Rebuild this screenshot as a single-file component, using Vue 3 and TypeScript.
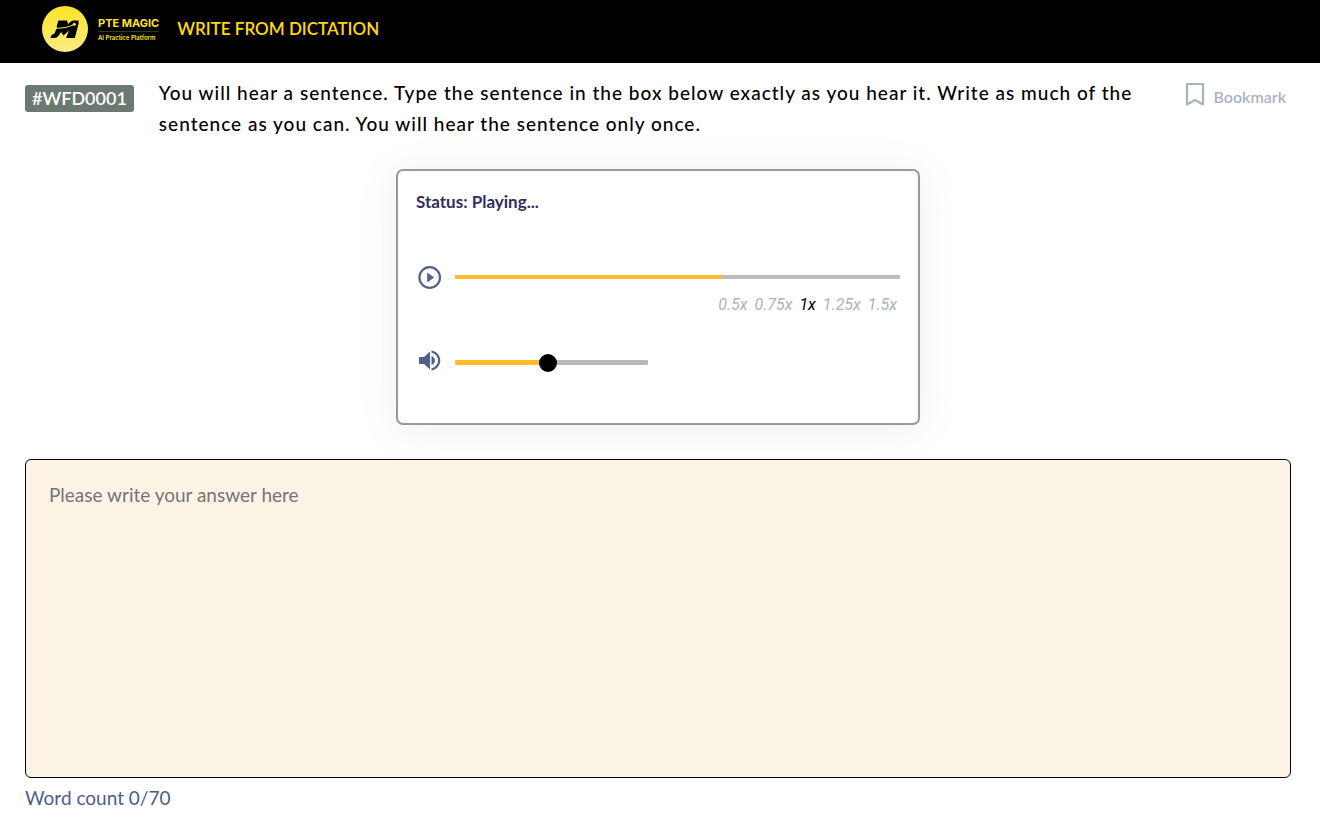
<script setup lang="ts">
import { computed, ref } from 'vue'

const speeds = ['0.5x', '0.75x', '1x', '1.25x', '1.5x']
const speed = ref('1x')
const progress = ref(60)
const volume = ref(48)
const answer = ref('')
const wordLimit = 70

const wordCount = computed(() => answer.value.split(/\s+/).filter(Boolean).length)
const volumeStyle = computed(() => ({ '--level': `${volume.value}%` }))
</script>

<template>
  <div class="page">
    <header class="topbar">
      <a class="brand" href="#" aria-label="PTE Magic home">
        <svg class="logo" viewBox="0 0 46 46" aria-hidden="true">
          <defs>
            <linearGradient id="logo-fill" x1="0" y1="0" x2="0" y2="1">
              <stop offset="0" stop-color="#fde428" />
              <stop offset="1" stop-color="#f8ec82" />
            </linearGradient>
          </defs>
          <circle cx="23" cy="23" r="23" fill="url(#logo-fill)" />
          <path
            fill="#000"
            d="M16.500 14.500H25L26 18 29 15.500Q30.200 14.500 31.500 14.500H36.500V18L32.800 32H24L27 24.500 21.500 29.500 19 26 16.400 30Q15 32 12 32H8.500Q8.500 28.500 12.500 27.500L15.300 20.500H14.500Z"
          />
          <path d="M14 22.300Q25 22 31 19" fill="none" stroke="#fbe74e" stroke-width="1" />
          <circle cx="32.300" cy="18.200" r="1.500" fill="#fbe74e" />
        </svg>
        <span class="brand-text">
          <span class="brand-name">PTE MAGIC</span>
          <span class="brand-tag">AI Practice Platform</span>
        </span>
      </a>
      <h1 class="title">WRITE FROM DICTATION</h1>
    </header>

    <main class="content">
      <section class="intro">
        <span class="badge">#WFD0001</span>
        <p class="instruction">
          You will hear a sentence. Type the sentence in the box below exactly as you hear it.
          Write as much of the sentence as you can. You will hear the sentence only once.
        </p>
        <button class="bookmark" type="button">
          <svg class="bookmark-icon" viewBox="0 0 20 24" aria-hidden="true">
            <path d="M2 2H18V22.500L10 18 2 22.500Z" fill="none" stroke="#a9b3bf" stroke-width="2.200" stroke-linejoin="round" />
          </svg>
          <span class="bookmark-label">Bookmark</span>
        </button>
      </section>

      <section class="player" aria-label="Audio player">
        <p class="status">Status: Playing...</p>
        <div class="row">
          <button class="icon-button" type="button" aria-label="Play">
            <svg viewBox="0 0 24 24" aria-hidden="true">
              <circle cx="11.700" cy="12.500" r="10.300" fill="none" stroke="#53618a" stroke-width="2.200" />
              <path d="M9.200 7.500V17.500L16.200 12.500Z" fill="#53618a" />
            </svg>
          </button>
          <progress class="track" :value="progress" max="100" aria-label="Playback position"></progress>
        </div>
        <div class="speeds" role="group" aria-label="Playback speed">
          <button
            v-for="item in speeds"
            :key="item"
            type="button"
            class="speed"
            :class="{ active: item === speed }"
            :aria-pressed="item === speed"
            @click="speed = item"
          >{{ item }}</button>
        </div>
        <div class="row">
          <button class="icon-button" type="button" aria-label="Mute">
            <svg viewBox="0 0 24 24" aria-hidden="true">
              <path
                fill="#53618a"
                d="M1 7V14H6L12 19.500V1.500L6 7ZM13.500 6V15C15.700 14 17 12.500 17 10.500S15.700 7 13.500 6ZM13.500 .5V2.800C17.500 3.700 20 6.700 20 10.500S17.500 17.300 13.500 18.200V20.500C18.800 19.500 22.300 15.500 22.300 10.500S18.800 1.500 13.500 .5Z"
              />
            </svg>
          </button>
          <input v-model.number="volume" class="volume" type="range" min="0" max="100" aria-label="Volume" :style="volumeStyle" />
        </div>
      </section>

      <textarea v-model="answer" class="answer" placeholder="Please write your answer here" aria-label="Your answer"></textarea>
      <p class="count">Word count {{ wordCount }}/{{ wordLimit }}</p>
    </main>
  </div>
</template>

<style>
body {
  margin: 0;
  background: #fff;
}
</style>

<style scoped>
.page {
  font-family: Lato, "Open Sans", sans-serif;
  color: #000;
}

button {
  padding: 0;
  border: 0;
  background: none;
  font: inherit;
  color: inherit;
  cursor: pointer;
}

p,
h1 {
  margin: 0;
}

.topbar {
  display: flex;
  align-items: center;
  gap: 18px;
  box-sizing: border-box;
  height: 63px;
  padding: 0 42px 5px;
  background: #000;
}

.brand {
  display: flex;
  align-items: center;
  gap: 10px;
  color: #ffe42b;
  text-decoration: none;
}

.logo {
  display: block;
  width: 46px;
  height: 46px;
}

.brand-text {
  display: flex;
  flex-direction: column;
  font-family: Inter, sans-serif;
  white-space: nowrap;
}

.brand-name {
  border-bottom: 1px solid #3a3510;
  font-size: 11px;
  font-weight: 700;
  line-height: 16px;
}

.brand-tag {
  font-size: 6px;
  font-weight: 600;
  line-height: 12px;
}

.title {
  color: #ffd910;
  font-size: 17px;
  font-weight: 600;
  line-height: 24px;
}

.content {
  padding: 14px 29px 0 25px;
}

.intro {
  display: flex;
  align-items: flex-start;
}

.badge {
  flex: none;
  margin: 8px 25px 0 0;
  padding: 0 7px;
  border-radius: 3px;
  background: #6b7972;
  color: #fff;
  font-size: 18px;
  font-weight: 600;
  line-height: 27px;
}

.instruction {
  flex: 1;
  max-width: 980px;
  font-size: 19px;
  font-weight: 500;
  letter-spacing: 1px;
  line-height: 31px;
}

.bookmark {
  display: flex;
  align-items: flex-start;
  gap: 8px;
  margin: 5px 5px 0 auto;
  color: #a9b3bf;
  font-size: 16px;
  font-weight: 600;
  line-height: 30px;
}

.bookmark-icon {
  width: 20px;
  height: 24px;
}

.player {
  box-sizing: border-box;
  width: 100%;
  max-width: 524px;
  margin: 30px auto 34px;
  padding: 19px 18px 49px;
  border: 2px solid #999;
  border-radius: 7px;
  background: #fff;
  box-shadow: 0 4px 40px rgba(83, 97, 138, 0.1);
}

.status {
  margin-bottom: 51px;
  color: #302f5d;
  font-size: 17px;
  font-weight: 700;
  line-height: 24px;
}

.row {
  display: flex;
  align-items: center;
  gap: 13px;
  padding-left: 2px;
}

.icon-button {
  flex: none;
  width: 24px;
  height: 24px;
}

.icon-button svg {
  display: block;
}

.track {
  flex: 1;
  min-width: 0;
  height: 4px;
  border: 0;
  background: #bdbdbd;
  appearance: none;
}

.track::-webkit-progress-bar {
  background: #bdbdbd;
}

.track::-webkit-progress-value {
  background: #ffbb2b;
}

.speeds {
  display: flex;
  justify-content: flex-end;
  gap: 7px;
  margin: 4px 3px 33px 0;
  color: #a9b3bf;
  font-family: Roboto, sans-serif;
  font-size: 16px;
  font-style: italic;
  line-height: 24px;
}

.speed.active {
  color: #000;
}

.volume {
  width: 193px;
  height: 19px;
  margin: 0;
  background: transparent;
  appearance: none;
}

.volume::-webkit-slider-runnable-track {
  height: 5px;
  border-radius: 1px;
  background: linear-gradient(to right, #ffbb2b var(--level), #b9b9b9 var(--level));
}

.volume::-webkit-slider-thumb {
  width: 18px;
  height: 18px;
  margin-top: -6px;
  border-radius: 50%;
  background: #000;
  appearance: none;
}

.answer {
  display: block;
  box-sizing: border-box;
  width: 100%;
  height: 319px;
  padding: 21px 23px;
  border: 1px solid #000;
  border-radius: 6px;
  outline: 0;
  background: #fbf4e4;
  color: #000;
  font-family: inherit;
  font-size: 19px;
  font-weight: 400;
  line-height: 28px;
  resize: none;
}

.answer::placeholder {
  color: #757575;
}

.count {
  margin-top: 6px;
  color: #4f5d85;
  font-size: 19px;
  font-weight: 400;
  line-height: 28px;
}
</style>
